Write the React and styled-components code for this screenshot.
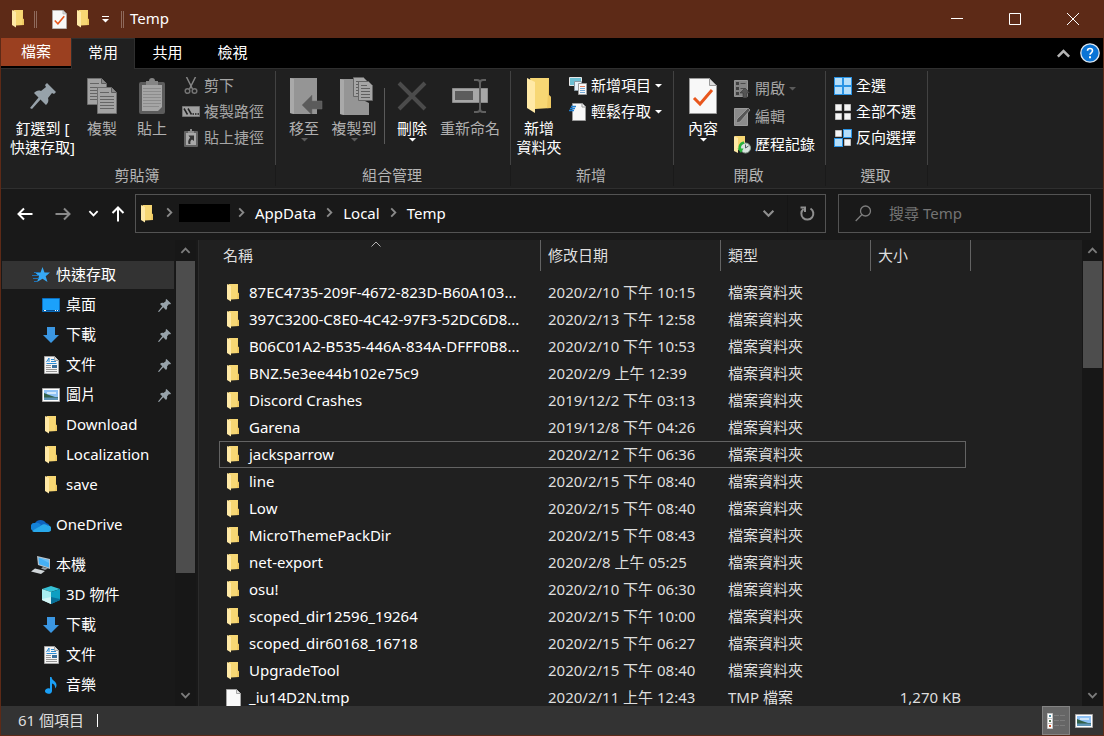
import React, { useState } from 'react';
import styled, { createGlobalStyle, css } from 'styled-components';

const GlobalStyle = createGlobalStyle`
  * {
    box-sizing: border-box;
  }
  body {
    margin: 0;
    background: #191919;
    color: #fff;
    font-family: 'Noto Sans', 'Noto Sans CJK TC', sans-serif;
    font-size: 15px;
    line-height: 18px;
  }
  button,
  input {
    padding: 0;
    border: 0;
    background: none;
    color: inherit;
    font: inherit;
  }
  svg {
    display: block;
    flex: none;
  }
`;

const Window = styled.div`
  display: flex;
  flex-direction: column;
  height: 100vh;
  border: solid #5d2a17;
  border-width: 0 1px 1px;
  overflow: hidden;
`;

const TitleBar = styled.header`
  display: flex;
  align-items: center;
  height: 38px;
  flex: none;
  padding: 0 1px 0 11px;
  background: #5d2a17;

  h1 {
    flex: 1;
    margin: 0;
    padding-bottom: 2px;
    font-size: 15px;
    font-weight: 400;
  }
`;

const QuickButton = styled.button`
  display: flex;
  align-items: center;
  justify-content: center;
  width: ${(props) => props.$width || 24}px;
  height: 26px;
`;

const TitleDivider = styled.span`
  width: 3px;
  height: 17px;
  margin: 0 ${(props) => props.$gap}px;
  border: solid #8f6a5c;
  border-width: 0 1px;
`;

const WindowButton = styled.button`
  display: flex;
  align-items: center;
  justify-content: center;
  width: 58px;
  height: 38px;
`;

const TabBar = styled.nav`
  display: flex;
  height: 30px;
  flex: none;
  background: #000;
`;

const Tab = styled.button`
  width: 65px;
  padding-bottom: 2px;
  ${(props) =>
    props.$active &&
    css`
      width: 64px;
      margin-bottom: -1px;
      padding-bottom: 4px;
      border: solid #2f2f2f;
      border-width: 1px 1px 0;
      background: #202020;
      position: relative;
    `}
`;

const FileTab = styled.button`
  width: 70px;
  height: 28px;
  padding-bottom: 2px;
  background: #9b4020;
`;

const TabTools = styled.div`
  display: flex;
  align-items: center;
  gap: 9px;
  margin-left: auto;
  padding-right: 3px;

  button {
    display: block;
  }
`;

const Ribbon = styled.section`
  display: flex;
  height: 121px;
  flex: none;
  padding-top: 2px;
  border: solid #2f2f2f;
  border-width: 1px 0;
  background: #202020;
`;

const Group = styled.div`
  display: flex;
  flex-direction: column;
  min-width: ${(props) => props.$width}px;

  h2 {
    height: 21px;
    margin: 0;
    padding-right: 2px;
    border-right: 1px solid #1a1a1a;
    color: #b4b4b4;
    font-size: 15px;
    font-weight: 400;
    line-height: 21px;
    text-align: center;
  }
`;

const GroupBody = styled.div`
  display: flex;
  align-items: flex-start;
  height: 94px;
  padding-left: ${(props) => props.$inset}px;
  border-right: 1px solid #424242;
`;

const BigButton = styled.button`
  display: flex;
  flex-direction: column;
  align-items: center;
  width: ${(props) => props.$width}px;
  padding-top: 3px;
  color: ${(props) => (props.$dim ? '#b0b0b0' : '#fff')};
  line-height: 19px;
  white-space: pre-line;

  .icon {
    display: flex;
    align-items: center;
    justify-content: center;
    height: 44px;
    margin-bottom: 1px;
  }
`;

const SmallColumn = styled.div`
  display: flex;
  flex-direction: column;
  padding: ${(props) => props.$top || 2}px 0 0 ${(props) => props.$left}px;
`;

const SmallButton = styled.button`
  display: flex;
  align-items: center;
  gap: 4px;
  height: ${(props) => props.$height || 26}px;
  color: ${(props) => (props.$dim ? '#a6a6a6' : '#fff')};
  white-space: nowrap;

  .label {
    padding-bottom: 2px;
  }
`;

const RibbonDivider = styled.span`
  width: 1px;
  height: 56px;
  margin: 17px 2px 0 4px;
  background: #5a5a5a;
`;

const AddressRow = styled.div`
  display: flex;
  align-items: center;
  height: 51px;
  flex: none;
  padding: 0 12px 2px 9px;
`;

const NavButton = styled.button`
  display: flex;
  align-items: center;
  justify-content: center;
  width: ${(props) => props.$width}px;
  height: 30px;
`;

const AddressBox = styled.div`
  display: flex;
  flex: 1;
  align-items: center;
  height: 39px;
  padding-left: 5px;
  border: 1px solid #535353;

  .crumb {
    padding: 0 8px 2px 4px;
  }
  .chevron {
    margin: 0 4px 2px 0;
  }
  .place {
    margin-right: 11px;
  }
`;

const Redacted = styled.span`
  width: 51px;
  height: 18px;
  margin: 0 6px 2px 0;
  background: #000;
`;

const AddressEnd = styled.div`
  display: flex;
  align-self: stretch;
  margin-left: auto;

  button {
    display: flex;
    align-items: center;
    justify-content: center;
    width: 38px;
  }
  button + button {
    width: 38px;
    border-left: 1px solid #151515;
  }
`;

const SearchBox = styled.label`
  display: flex;
  width: 253px;
  flex: none;
  align-items: center;
  gap: 17px;
  height: 39px;
  margin-left: 12px;
  padding-left: 16px;
  border: 1px solid #535353;

  input {
    flex: 1;
    min-width: 0;
    padding-bottom: 2px;
    outline: 0;
  }
  input::placeholder {
    color: #747474;
    opacity: 1;
  }
`;

const Body = styled.div`
  display: flex;
  flex: 1;
  min-height: 0;
`;

const Sidebar = styled.nav`
  width: 174px;
  flex: none;
  padding: 20px 1px 0;
  overflow: hidden;
`;

const SideItem = styled.a`
  display: flex;
  align-items: center;
  height: 28px;
  margin: 1px 0;
  margin-top: ${(props) => (props.$spaced ? 12 : 2)}px;
  padding: 0 3px 0 ${(props) => (props.$nested ? 39 : 29)}px;
  background: ${(props) => (props.$active ? '#333' : 'none')};
  color: #fff;
  text-decoration: none;
  white-space: nowrap;

  &:first-child {
    margin-top: 1px;
  }
  & + & {
    margin-bottom: 0;
  }
  .icon {
    display: flex;
    justify-content: center;
    width: 20px;
    margin-right: 5px;
  }
  .label {
    padding-bottom: 2px;
  }
  .pin {
    margin-left: auto;
  }
`;

const Scroll = styled.div`
  display: flex;
  flex-direction: column;
  align-items: center;
  width: 21px;
  flex: none;
  background: #171717;

  .up {
    display: flex;
    align-items: center;
    height: 21px;
  }
  .thumb {
    width: 19px;
    background: #4d4d4d;
  }
  .down {
    margin-top: auto;
    padding-bottom: 5px;
  }
`;

const Content = styled.main`
  flex: 1;
  min-width: 0;
  margin-left: 2px;
  padding-left: 20px;
  border-left: 1px solid #2b2b2b;
  background: #202020;
  overflow: hidden;
`;

const FileTable = styled.table`
  width: 752px;
  table-layout: fixed;
  border-collapse: collapse;

  th {
    height: 39px;
    padding: 0;
    color: #dedede;
    font-weight: 400;
    text-align: left;
    vertical-align: top;
  }
  td {
    height: 27px;
    padding: 0 10px 2px 7px;
    color: #dedede;
    white-space: nowrap;
  }
  td:first-child {
    color: #fff;
  }
  td:last-child {
    text-align: right;
  }
`;

const HeadCell = styled.div`
  position: relative;
  height: 31px;
  padding-left: ${(props) => props.$inset || 7}px;
  border-right: 1px solid #636363;
  line-height: 31px;

  svg {
    position: absolute;
    top: -2px;
    left: 49%;
    transform: translateX(-50%);
  }
`;

const FileRow = styled.tr`
  position: relative;
  ${(props) =>
    props.$focused &&
    css`
      td:first-child::before {
        content: '';
        position: absolute;
        inset: 0 5px 0 0;
        border: 1px solid #636363;
      }
    `}
`;

const FileName = styled.div`
  display: flex;
  align-items: center;
  gap: 9px;

  .icon {
    display: flex;
    justify-content: center;
    width: 14px;
    padding-top: 2px;
  }
`;

const StatusBar = styled.footer`
  display: flex;
  align-items: center;
  height: 29px;
  flex: none;
  padding: 0 5px 0 17px;
  background: #333;
  color: #dedede;

  .count {
    flex: 1;
    padding-bottom: 2px;
  }
  .count::after {
    content: '';
    display: inline-block;
    width: 1px;
    height: 13px;
    margin-left: 13px;
    background: #fff;
    vertical-align: -1px;
  }
`;

const ViewButton = styled.button`
  display: flex;
  align-items: center;
  justify-content: center;
  width: 28px;
  height: 29px;
  border: 1px solid ${(props) => (props.$active ? '#838383' : 'transparent')};
  background: ${(props) => (props.$active ? '#666' : 'none')};
`;

const Chevron = ({ dir = 'down', size = 11, color = '#fff', width = 2, className }) => {
  const turn = { down: 0, up: 180, right: -90 }[dir];
  return (
    <svg className={className} width={size} height={size} viewBox="0 0 12 12">
      <path
        d="M1.5 3.5L6 8l4.5-4.5"
        fill="none"
        stroke={color}
        strokeWidth={width}
        transform={`rotate(${turn} 6 6)`}
      />
    </svg>
  );
};

const Arrow = ({ color = '#fff', className }) => (
  <svg className={className} width="7" height="4" viewBox="0 0 7 4">
    <path d="M0 0h7L3.5 3.5z" fill={color} />
  </svg>
);

const Folder = ({ big, className }) => (
  <svg
    className={className}
    width={big ? 24 : 12}
    height={big ? 36 : 18}
    viewBox="0 0 24 36"
  >
    <path d="M3 0h19v17l2 2v11l-16 1z" fill="#f7d774" />
    <path d="M22 0v17l2 2v11l-4 .2z" fill="#e9bf57" opacity=".6" />
    <path d="M0 0l8 4v31l-8-5z" fill="#ffe9a6" />
  </svg>
);

const CheckPage = ({ big }) => (
  <svg width={big ? 28 : 15} height={big ? 36 : 19} viewBox="0 0 28 36">
    <path d="M.5.5h20l7 7v28H.5z" fill="#f8f8f8" stroke="#9a9a9a" />
    <path d="M20.5.5v7h7z" fill="#dcdcdc" stroke="#9a9a9a" />
    <path d="M5 20l6 6L23 12" fill="none" stroke="#e8561c" strokeWidth="3" />
  </svg>
);

const Pushpin = ({ size = 13 }) => (
  <svg width={size} height={size} viewBox="0 0 26 26">
    <path
      d="M17 0l9 9-2 2-2-1-4 5c1 3 0 5-2 7l-5.5-5.5L2 26l-2-1 8.5-10.5L4 10c2-2 4-3 7-2l5-4-1-2z"
      fill="#97a2aa"
    />
  </svg>
);

const CopyPages = () => (
  <svg width="30" height="36" viewBox="0 0 30 36">
    {[
      [0, 0],
      [10, 9],
    ].map(([x, y]) => (
      <g key={x} transform={`translate(${x} ${y})`}>
        <path d="M.5.5h14l5 5v21H.5z" fill="#a3a3a3" stroke="#6f6f6f" />
        <path d="M14.5.5v5h5" fill="#8a8a8a" stroke="#5e5e5e" />
        <path
          d="M3 5.5h9M3 9.5h14M3 12.5h14M3 15.5h14M3 18.5h14M3 21.5h14"
          stroke="#656565"
        />
      </g>
    ))}
  </svg>
);

const Clipboard = () => (
  <svg width="26" height="36" viewBox="0 0 26 36">
    <rect y="4" width="26" height="32" rx="2" fill="#5c5c5c" />
    <path d="M3 7h20v22l-4 4H3z" fill="#a5a5a5" />
    <path d="M7 7V3h3a3 3 0 016 0h3v4z" fill="#858585" />
    <path
      d="M4 10.5h18M4 13.5h18M4 16.5h18M4 19.5h18M4 22.5h18M4 25.5h18M4 28.5h16"
      stroke="#8c8c8c"
    />
  </svg>
);

const Scissors = () => (
  <svg width="18" height="18" viewBox="0 0 18 18">
    <path d="M4.5 0l6 12M13.5 0l-6 12" stroke="#858585" strokeWidth="1.5" />
    <circle cx="5.5" cy="14" r="2.3" fill="none" stroke="#747474" strokeWidth="1.5" />
    <circle cx="12.5" cy="14" r="2.3" fill="none" stroke="#747474" strokeWidth="1.5" />
  </svg>
);

const CopyPath = () => (
  <svg width="18" height="18" viewBox="0 0 18 18">
    <path d="M.5 3.5h17v10H.5z" fill="#a0a0a0" stroke="#777" />
    <path d="M2 5.5l3.5 6M6 5.5l3.5 6" stroke="#222" strokeWidth="1.5" />
    <path d="M10.5 11H12M13 11h1.500M15.500 11H17" stroke="#222" strokeWidth="1.5" />
  </svg>
);

const PasteLink = () => (
  <svg width="18" height="18" viewBox="0 0 18 18">
    <rect x="2" y="2" width="14" height="16" rx="1" fill="#626262" />
    <path d="M4 4h10v12H4z" fill="#a8a8a8" />
    <path d="M6 4V2h2V0h2v2h2v2z" fill="#8b8b8b" />
    <path d="M6.5 6.5H12V12l-2-1.5c-1.5 1-2 2-1.5 4.5h-2c-1-3 .5-5 1.7-6.3z" fill="#333" />
  </svg>
);

const MoveTo = () => (
  <svg width="40" height="36" viewBox="-6 0 40 36">
    <path d="M0 0h27v36H4l-4-1z" fill="#959595" />
    <path d="M0 0l4 1v35l-4-1z" fill="#a9a9a9" />
    <path d="M12 27l10-10v6h10v8H22v6z" fill="#5b5b5b" stroke="#6f6f6f" strokeWidth=".5" />
  </svg>
);

const CopyTo = () => (
  <svg width="40" height="38" viewBox="-6 0 40 38">
    <path d="M0 2h25v22l4 2v12H4l-4-1z" fill="#959595" />
    <path d="M0 2l4 1v35l-4-1z" fill="#a9a9a9" />
    {[
      [13, 0],
      [18, 4],
    ].map(([x, y]) => (
      <g key={x} transform={`translate(${x} ${y})`}>
        <path d="M.5.5h10l4 4v15H.5z" fill="#a5a5a5" stroke="#666" />
        <path d="M3 4.5h6M3 7.5h9M3 10.5h9M3 13.5h9M3 16.5h9" stroke="#606060" />
      </g>
    ))}
  </svg>
);

const DeleteCross = () => (
  <svg width="30" height="30" viewBox="0 0 30 30">
    <path d="M2 2l26 26M28 2L2 28" stroke="#4b4b4b" strokeWidth="4" />
  </svg>
);

const Rename = () => (
  <svg width="36" height="34" viewBox="0 0 36 34">
    <path d="M.5 9.5h35v14H.5z" fill="#a7a7a7" stroke="#8a8a8a" />
    <path d="M3 12h18v9H3z" fill="#5c5c5c" />
    <path
      d="M22 1h3q3 0 3 3v26q0 3-3 3h-3M34 1h-3q-3 0-3 3v26q0 3 3 3h3"
      fill="none"
      stroke="#606060"
      strokeWidth="2"
    />
  </svg>
);

const NewItem = () => (
  <svg width="18" height="18" viewBox="0 0 18 18">
    <path d="M.5.5h12v8H.5z" fill="#6cc0d4" stroke="#e8e8e8" />
    <path d="M5.5 4.5h7v9h-7z" fill="#e6f1fa" stroke="#8a9aa5" />
    <path d="M9.5 6.5h8v11h-8z" fill="#f8f8f8" stroke="#9a9a9a" />
    <path d="M11 9.5h5" stroke="#e57c5b" />
    <path d="M11 11.5h5M11 13.5h5M11 15.5h5" stroke="#76a8d4" />
  </svg>
);

const EasyAccess = () => (
  <svg width="18" height="18" viewBox="0 0 18 18">
    <path d="M3.5.5h10l3 3v14h-13z" fill="#f8f8f8" stroke="#9a9a9a" />
    <path d="M13 1v3h3" fill="none" stroke="#9a9a9a" />
    <path d="M2 3.5h5M1 5.5h5M0 7.5h5" stroke="#1f7fd1" strokeWidth="1.5" />
  </svg>
);

const OpenIcon = () => (
  <svg width="17" height="18" viewBox="0 0 17 18">
    <path d="M.5.5h13v16H.5z" fill="#858585" stroke="#969696" />
    <path d="M2 2h3v3H2zM2 7h3v3H2zM2 12h3v3H2z" fill="#404040" />
    <path d="M6.5 3.5h5M6.5 8.5h4" stroke="#4b4b4b" />
    <path d="M6 13l5-5 5 5h-3v5H9v-5z" fill="#555" stroke="#2b2b2b" strokeWidth=".5" />
  </svg>
);

const EditIcon = () => (
  <svg width="17" height="18" viewBox="0 0 17 18">
    <path d="M.5.5h13v17H.5z" fill="#8b8b8b" stroke="#9b9b9b" />
    <path d="M2 15l1-4L14 0l2 2L6 14z" fill="#565656" stroke="#a8a8a8" strokeWidth=".7" />
  </svg>
);

const HistoryIcon = () => (
  <svg width="17" height="18" viewBox="0 0 17 18">
    <path d="M1 0h10v14H1z" fill="#f7d774" />
    <path d="M0 0l4 2v15l-4-2z" fill="#ffe9a6" />
    <circle cx="11.5" cy="12" r="5" fill="#d9e3df" stroke="#8ba394" />
    <path d="M11.5 8.5V12l3-2" fill="none" stroke="#4b5b60" />
    <path d="M10 6.5c-4 1-5 4-4 7" fill="none" stroke="#28b43c" strokeWidth="2.5" />
    <path d="M3.5 12.5h6L7 17z" fill="#28b43c" />
  </svg>
);

// filled lists which of the four tiles are drawn as selected
const Tiles = ({ filled }) => (
  <svg width="18" height="18" viewBox="0 0 18 18">
    {[
      [0, 0],
      [9, 0],
      [0, 9],
      [9, 9],
    ].map(([x, y], idx) =>
      filled.includes(idx) ? (
        <g key={idx}>
          <path d={`M${x} ${y}h9v9h-9z`} fill="#2a93e4" />
          <path d={`M${x + 1} ${y + 1}h7v7h-7z`} fill="#b5defa" />
        </g>
      ) : (
        <path
          key={idx}
          d={`M${x + 1.5} ${y + 1.5}h6v6h-6z`}
          fill="#f5f5f5"
          stroke="#bdbdbd"
        />
      )
    )}
  </svg>
);

const NavArrow = ({ dir, color = '#fff' }) => (
  <svg width="16" height="16" viewBox="0 0 16 16">
    <path
      d="M15.5 8H1.5M7 2.5L1.5 8L7 13.5"
      fill="none"
      stroke={color}
      strokeWidth="2"
      transform={`rotate(${{ left: 0, right: 180, up: 90 }[dir]} 8 8)`}
    />
  </svg>
);

const Refresh = () => (
  <svg width="16" height="16" viewBox="0 0 16 16">
    <path d="M11.5 2.5A6 6 0 11 4.5 3" fill="none" stroke="#8f8f8f" strokeWidth="2" />
    <path d="M1.5 1.5H6V6" fill="none" stroke="#8f8f8f" strokeWidth="2" />
  </svg>
);

const Magnifier = () => (
  <svg width="17" height="17" viewBox="0 0 17 17">
    <circle cx="10.5" cy="6" r="5" fill="none" stroke="#7d7d7d" strokeWidth="1.3" />
    <path d="M7 9.5L.7 16" stroke="#7d7d7d" strokeWidth="1.3" />
  </svg>
);

const StarIcon = () => (
  <svg width="18" height="16" viewBox="0 0 18 16">
    <path d="M10.5 0l2 5.5H18l-4.3 3.7L15.5 15l-5-3.3L5 15l2-5.8L3 5.5h5.5z" fill="#36a9f5" />
    <path d="M2 5.5h5M0 8.5h7M1 11.5h6M2 14.5h3" stroke="#1d72b8" />
  </svg>
);

const Desktop = () => (
  <svg width="18" height="14" viewBox="0 0 18 14">
    <path d="M.5.5h17v13H.5z" fill="#1ba1fb" stroke="#0b6fc0" />
    <path d="M1 12.5h16" stroke="#0a4f8f" />
    <path d="M2 12.5h2M13 12.5h1M15 12.5h1" stroke="#fff" />
  </svg>
);

const Download = () => (
  <svg width="16" height="16" viewBox="0 0 16 16">
    <path d="M4 0h8v8h4l-8 8-8-8h4z" fill="#3b97e3" />
  </svg>
);

const Document = () => (
  <svg width="15" height="18" viewBox="0 0 15 18">
    <path d="M.5.5h10l4 4v13H.5z" fill="#f5f5f5" stroke="#a5a5a5" />
    <path d="M10.5.5v4h4" fill="#ddd" stroke="#a5a5a5" />
    <path d="M2.5 6L5 2v4M7 3.5h3M7 5.5h5M2.5 7.5h10" fill="none" stroke="#2c8bd4" />
    <path d="M2 9.5h5M2 11.5h5M2 13.5h11M2 15.5h11" stroke="#949494" />
    <path d="M8 9h5v3H8z" fill="#3a6f9c" />
  </svg>
);

const Picture = () => (
  <svg width="18" height="14" viewBox="0 0 18 14">
    <path d="M.5.5h17v13H.5z" fill="#fff" stroke="#a8a8a8" />
    <path d="M2 2h14v10H2z" fill="#8fc2f5" />
    <path d="M5 4h9v2H5z" fill="#d2e8fb" />
    <path d="M2 5l5 2 6 2h3v1H2z" fill="#33624a" />
    <path d="M2 9.5h14V12H2z" fill="#5d93b5" />
  </svg>
);

const Cloud = () => (
  <svg width="20" height="13" viewBox="0 0 20 13">
    <path d="M4 12a4 4 0 010-8 6.5 6.5 0 0111 0 4.5 4.5 0 012 8z" fill="#0f63bf" />
    <path d="M4.5 4C7 3 9 5 10 6l-7 6a4 4 0 011.5-8z" fill="#1482d8" />
    <path d="M10 6.5c3-2.5 6-1 6.5 0a3.2 3.2 0 011 6.500H4c-1.5 0-2.500-.5-3-1z" fill="#28a8ea" />
  </svg>
);

const Computer = () => (
  <svg width="20" height="18" viewBox="0 0 20 18">
    <path d="M6 0l13 3v10L7 9z" fill="#b9c3ca" />
    <path d="M7.5 1.5L18 4v7.5L8 8.2z" fill="#45b0f5" />
    <path d="M7.5 1.5L18 4v3z" fill="#8cd0fb" opacity=".5" />
    <path d="M12 11l5 1.5-3 1.5-4-1.5z" fill="#98a1a7" />
    <path d="M4 12.5l10 2.5-4 3-10-2.5z" fill="#d0d5d8" />
  </svg>
);

const Cube = () => (
  <svg width="18" height="18" viewBox="0 0 18 18">
    <path d="M9 0l9 3-9 3-9-3z" fill="#35c1d6" />
    <path d="M0 3l9 3v12l-9-4z" fill="#a9eef0" />
    <path d="M18 3L9 6v12l9-4z" fill="#0e9fc2" />
    <path d="M0 13l9-2v7l-9-4z" fill="#d4f6f6" />
    <path d="M18 13l-9-2v7l9-4z" fill="#087099" />
  </svg>
);

const Note = () => (
  <svg width="12" height="17" viewBox="0 0 12 17">
    <path
      d="M5 0h1.5c.5 4 5 4 5 8 0 1.5-.5 2.5-1.5 3.5.5-3-1-4.5-3-5V14a3.500 2.800 0 11-2-2.500z"
      fill="#1a9ff5"
    />
  </svg>
);

const BlankFile = () => (
  <svg width="15" height="18" viewBox="0 0 15 18">
    <path d="M.5.5h10l4 4v13H.5z" fill="#fafafa" stroke="#a5a5a5" />
    <path d="M10.5.5v4h4" fill="#e5e5e5" stroke="#a5a5a5" />
  </svg>
);

const DetailsIcon = () => (
  <svg width="18" height="16" viewBox="0 0 18 16">
    {['#4b8fa8', '#5a7a5a', '#d0532c'].map((color, idx) => (
      <g key={color} transform={`translate(0 ${idx * 5})`}>
        <path d="M.5.5h5v5h-5z" fill="#fff" stroke="#c4c4c4" />
        <path d="M2 2h2v2H2z" fill={color} />
        <path d="M7 2.5h5M13 2.5h5" stroke="#7c7c7c" />
      </g>
    ))}
  </svg>
);

const HelpIcon = () => (
  <svg width="20" height="20" viewBox="0 0 20 20">
    <circle cx="10" cy="10" r="9.2" fill="#0a74d6" stroke="#dce6ef" strokeWidth="1.3" />
    <path d="M7.5 7.8c0-3 5-3 5 0 0 2-2.5 2-2.5 4" fill="none" stroke="#fff" strokeWidth="1.6" />
    <path d="M9 13.2h2v2H9z" fill="#fff" />
  </svg>
);

const sideItems = [
  { label: '快速存取', icon: <StarIcon />, active: true },
  { label: '桌面', icon: <Desktop />, nested: true, pinned: true },
  { label: '下載', icon: <Download />, nested: true, pinned: true },
  { label: '文件', icon: <Document />, nested: true, pinned: true },
  { label: '圖片', icon: <Picture />, nested: true, pinned: true },
  { label: 'Download', icon: <Folder />, nested: true },
  { label: 'Localization', icon: <Folder />, nested: true },
  { label: 'save', icon: <Folder />, nested: true },
  { label: 'OneDrive', icon: <Cloud />, spaced: true },
  { label: '本機', icon: <Computer />, spaced: true },
  { label: '3D 物件', icon: <Cube />, nested: true },
  { label: '下載', icon: <Download />, nested: true },
  { label: '文件', icon: <Document />, nested: true },
  { label: '音樂', icon: <Note />, nested: true },
];

const files = [
  ['87EC4735-209F-4672-823D-B60A103...', '2020/2/10 下午 10:15'],
  ['397C3200-C8E0-4C42-97F3-52DC6D8...', '2020/2/13 下午 12:58'],
  ['B06C01A2-B535-446A-834A-DFFF0B8...', '2020/2/10 下午 10:53'],
  ['BNZ.5e3ee44b102e75c9', '2020/2/9 上午 12:39'],
  ['Discord Crashes', '2019/12/2 下午 03:13'],
  ['Garena', '2019/12/8 下午 04:26'],
  ['jacksparrow', '2020/2/12 下午 06:36'],
  ['line', '2020/2/15 下午 08:40'],
  ['Low', '2020/2/15 下午 08:40'],
  ['MicroThemePackDir', '2020/2/15 下午 08:43'],
  ['net-export', '2020/2/8 上午 05:25'],
  ['osu!', '2020/2/10 下午 06:30'],
  ['scoped_dir12596_19264', '2020/2/15 下午 10:00'],
  ['scoped_dir60168_16718', '2020/2/15 下午 06:27'],
  ['UpgradeTool', '2020/2/15 下午 08:40'],
  ['_iu14D2N.tmp', '2020/2/11 上午 12:43', 'TMP 檔案', '1,270 KB'],
];

const Big = ({ icon, label, width, dim, arrow }) => (
  <BigButton $width={width} $dim={dim}>
    <span className="icon">{icon}</span>
    {label}
    {arrow && <Arrow color={arrow} />}
  </BigButton>
);

const Small = ({ icon, label, dim, height, arrow }) => (
  <SmallButton $dim={dim} $height={height}>
    {icon}
    <span className="label">{label}</span>
    {arrow && <Arrow color={arrow} />}
  </SmallButton>
);

const ScrollBar = ({ thumb }) => (
  <Scroll>
    <span className="up">
      <Chevron dir="up" color="#7c7c7c" />
    </span>
    <span className="thumb" style={{ height: `${thumb}%` }} />
    <span className="down">
      <Chevron color="#7c7c7c" />
    </span>
  </Scroll>
);

const App = () => {
  const [focused, setFocused] = useState('jacksparrow');
  const [search, setSearch] = useState('');

  return (
    <>
      <GlobalStyle />
      <Window>
        <TitleBar>
          <Folder />
          <TitleDivider $gap={10} />
          <QuickButton aria-label="內容">
            <CheckPage />
          </QuickButton>
          <QuickButton aria-label="新增資料夾">
            <Folder />
          </QuickButton>
          <QuickButton $width={20} aria-label="自訂快速存取工具列">
            <svg width="7" height="7" viewBox="0 0 7 7">
              <path d="M0 .5h7" stroke="#fff" />
              <path d="M0 3h7L3.5 6.5z" fill="#fff" />
            </svg>
          </QuickButton>
          <TitleDivider $gap={6} />
          <h1>Temp</h1>
          <WindowButton aria-label="最小化">
            <svg width="12" height="12" viewBox="0 0 12 12">
              <path d="M0 5.5h12" stroke="#fff" />
            </svg>
          </WindowButton>
          <WindowButton aria-label="最大化">
            <svg width="12" height="12" viewBox="0 0 12 12">
              <path d="M.5.5h11v11H.5z" fill="none" stroke="#fff" />
            </svg>
          </WindowButton>
          <WindowButton aria-label="關閉">
            <svg width="12" height="12" viewBox="0 0 12 12">
              <path d="M0 0l12 12M12 0L0 12" stroke="#fff" />
            </svg>
          </WindowButton>
        </TitleBar>

        <TabBar>
          <FileTab>檔案</FileTab>
          <Tab $active>常用</Tab>
          <Tab>共用</Tab>
          <Tab>檢視</Tab>
          <TabTools>
            <button aria-label="最小化功能區">
              <Chevron dir="up" size={15} color="#b4b4b4" />
            </button>
            <button aria-label="說明">
              <HelpIcon />
            </button>
          </TabTools>
        </TabBar>

        <Ribbon>
          <Group $width={275}>
            <GroupBody $inset={4}>
              <Big icon={<Pushpin size={26} />} label={'釘選到 [\n快速存取]'} width={75} />
              <Big icon={<CopyPages />} label="複製" width={44} dim />
              <Big icon={<Clipboard />} label="貼上" width={56} dim />
              <SmallColumn $left={2}>
                <Small icon={<Scissors />} label="剪下" dim />
                <Small icon={<CopyPath />} label="複製路徑" dim />
                <Small icon={<PasteLink />} label="貼上捷徑" dim />
              </SmallColumn>
            </GroupBody>
            <h2>剪貼簿</h2>
          </Group>
          <Group $width={235}>
            <GroupBody $inset={4}>
              <Big icon={<MoveTo />} label="移至" width={48} dim arrow="#5a5a5a" />
              <Big icon={<CopyTo />} label="複製到" width={52} dim arrow="#5a5a5a" />
              <RibbonDivider />
              <Big icon={<DeleteCross />} label="刪除" width={50} arrow="#fff" />
              <Big icon={<Rename />} label="重新命名" width={66} dim />
            </GroupBody>
            <h2>組合管理</h2>
          </Group>
          <Group $width={163}>
            <GroupBody $inset={3}>
              <Big icon={<Folder big />} label={'新增\n資料夾'} width={50} />
              <SmallColumn $left={5}>
                <Small icon={<NewItem />} label="新增項目" arrow="#fff" />
                <Small icon={<EasyAccess />} label="輕鬆存取" arrow="#fff" />
              </SmallColumn>
            </GroupBody>
            <h2>新增</h2>
          </Group>
          <Group $width={152}>
            <GroupBody $inset={4}>
              <Big icon={<CheckPage big />} label="內容" width={50} arrow="#fff" />
              <SmallColumn $left={6} $top={4}>
                <Small icon={<OpenIcon />} label="開啟" height={28} dim arrow="#5a5a5a" />
                <Small icon={<EditIcon />} label="編輯" height={28} dim />
                <Small icon={<HistoryIcon />} label="歷程記錄" height={28} />
              </SmallColumn>
            </GroupBody>
            <h2>開啟</h2>
          </Group>
          <Group $width={102}>
            <GroupBody $inset={0}>
              <SmallColumn $left={8}>
                <Small icon={<Tiles filled={[0, 1, 2, 3]} />} label="全選" />
                <Small icon={<Tiles filled={[]} />} label="全部不選" />
                <Small icon={<Tiles filled={[1, 2]} />} label="反向選擇" />
              </SmallColumn>
            </GroupBody>
            <h2>選取</h2>
          </Group>
        </Ribbon>

        <AddressRow>
          <NavButton $width={30} aria-label="上一頁">
            <NavArrow dir="left" />
          </NavButton>
          <NavButton $width={46} aria-label="下一頁">
            <NavArrow dir="right" color="#8a8a8a" />
          </NavButton>
          <NavButton $width={14} aria-label="最近的位置">
            <Chevron size={11} />
          </NavButton>
          <NavButton $width={35} aria-label="上移">
            <NavArrow dir="up" />
          </NavButton>
          <AddressBox>
            <Folder className="place" />
            <Chevron className="chevron" dir="right" color="#8a8a8a" />
            <Redacted />
            <Chevron className="chevron" dir="right" color="#8a8a8a" />
            <button className="crumb">AppData</button>
            <Chevron className="chevron" dir="right" color="#8a8a8a" />
            <button className="crumb">Local</button>
            <Chevron className="chevron" dir="right" color="#8a8a8a" />
            <button className="crumb">Temp</button>
            <AddressEnd>
              <button aria-label="先前的位置">
                <Chevron size={13} color="#8f8f8f" />
              </button>
              <button aria-label="重新整理">
                <Refresh />
              </button>
            </AddressEnd>
          </AddressBox>
          <SearchBox>
            <Magnifier />
            <input
              type="text"
              placeholder="搜尋 Temp"
              value={search}
              onChange={(e) => setSearch(e.target.value)}
            />
          </SearchBox>
        </AddressRow>

        <Body>
          <Sidebar>
            {sideItems.map((item, idx) => (
              <SideItem
                href="#"
                key={idx}
                $active={item.active}
                $nested={item.nested}
                $spaced={item.spaced}
              >
                <span className="icon">{item.icon}</span>
                <span className="label">{item.label}</span>
                {item.pinned && (
                  <span className="pin">
                    <Pushpin />
                  </span>
                )}
              </SideItem>
            ))}
          </Sidebar>
          <ScrollBar thumb={67} />
          <Content>
            <FileTable>
              <colgroup>
                <col width="322" />
                <col width="180" />
                <col width="150" />
                <col width="100" />
              </colgroup>
              <thead>
                <tr>
                  <th>
                    <HeadCell $inset={4}>
                      名稱
                      <Chevron dir="up" size={12} color="#b4b4b4" width={1} />
                    </HeadCell>
                  </th>
                  <th>
                    <HeadCell>修改日期</HeadCell>
                  </th>
                  <th>
                    <HeadCell>類型</HeadCell>
                  </th>
                  <th>
                    <HeadCell>大小</HeadCell>
                  </th>
                </tr>
              </thead>
              <tbody>
                {files.map(([name, date, type, size]) => (
                  <FileRow key={name} $focused={focused === name} onClick={() => setFocused(name)}>
                    <td>
                      <FileName>
                        <span className="icon">{size ? <BlankFile /> : <Folder />}</span>
                        {name}
                      </FileName>
                    </td>
                    <td>{date}</td>
                    <td>{type || '檔案資料夾'}</td>
                    <td>{size}</td>
                  </FileRow>
                ))}
              </tbody>
            </FileTable>
          </Content>
          <ScrollBar thumb={23} />
        </Body>

        <StatusBar>
          <span className="count">61 個項目</span>
          <ViewButton $active aria-label="詳細資料">
            <DetailsIcon />
          </ViewButton>
          <ViewButton aria-label="大圖示">
            <Picture />
          </ViewButton>
        </StatusBar>
      </Window>
    </>
  );
};

export default App;
